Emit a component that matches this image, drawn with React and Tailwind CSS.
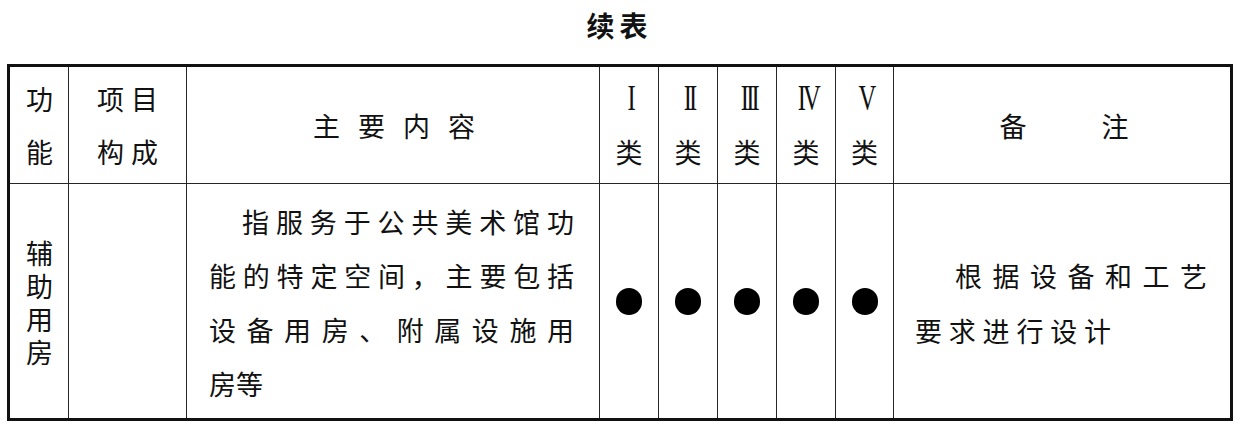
import React from 'react';

const CJK = { fontFamily: '"Noto Sans CJK SC", "Noto Sans", sans-serif' };

// spreads the characters of one line across its box, first glyph at the left edge and last at the right
const Spread = ({ text, className }) => (
  <div className={`flex justify-between ${className}`}>
    {[...text].map((c, i) => <span key={i}>{c}</span>)}
  </div>
);

const Roman = ({ children }) => (
  <div className="h-[53px] flex items-center justify-center">
    <span className="inline-block scale-x-[0.7] tracking-[-4px] text-[35px] leading-none font-['Liberation_Serif',serif] pl-[4px]">
      {children}
    </span>
  </div>
);

const CLASSES = ['I', 'II', 'III', 'IV', 'V'];

const cell = 'border-[#262626]';

export default function App() {
  return (
    <div className="w-[1245px] h-[432px] bg-white text-[#111] overflow-hidden text-[27px]" style={CJK}>

      {/* ── TITLE ── */}
      <div className="h-[64px] flex items-center justify-center pb-[15px] pr-[6px]">
        <span className="font-bold text-[28px] leading-none tracking-[5px]">续表</span>
      </div>

      {/* ── TABLE ── */}
      <div className="ml-[7px] w-[1226px] h-[357px] border-[3px] border-[#111]">
        <div className="grid grid-cols-[59px_118px_413px_59px_59px_59px_59px_58px_336px] grid-rows-[117px_234px] h-full">

          {/* header row */}
          <div className={`border-r border-b ${cell} flex items-center justify-center pl-[1px]`}>
            <div className="w-[27px] leading-[53px] break-all">功能</div>
          </div>
          <div className={`border-r border-b ${cell} flex flex-col items-center justify-center leading-[53px]`}>
            <Spread text="项目" className="w-[61px]" />
            <Spread text="构成" className="w-[61px]" />
          </div>
          <div className={`border-r border-b ${cell} flex items-center justify-center leading-none pl-[2px]`}>
            <Spread text="主要内容" className="w-[162px]" />
          </div>
          {CLASSES.map((c) => (
            <div key={c} className={`border-r border-b ${cell} flex flex-col justify-center`}>
              <Roman>{c}</Roman>
              <div className="h-[53px] flex items-center justify-center leading-none">类</div>
            </div>
          ))}
          <div className={`border-b ${cell} flex items-center justify-center leading-none pl-[4px]`}>
            <Spread text="备注" className="w-[129px]" />
          </div>

          {/* body row */}
          <div className={`border-r ${cell} flex items-center justify-center pt-[1px] pl-[1px]`}>
            <div className="w-[27px] leading-[33px] break-all">辅助用房</div>
          </div>
          <div className={`border-r ${cell}`} />
          <div className={`border-r ${cell} flex flex-col justify-center leading-[54px] pl-[22px] pr-[25px] pt-[3px]`}>
            <Spread text="指服务于公共美术馆功" className="pl-[33px]" />
            <Spread text="能的特定空间，主要包括" />
            <Spread text="设备用房、附属设施用" />
            <div>房等</div>
          </div>
          {CLASSES.map((c) => (
            <div key={c} className={`border-r ${cell} flex items-center justify-center`}>
              <div className="w-[26px] h-[27px] rounded-full bg-black" />
            </div>
          ))}
          <div className="flex flex-col justify-center leading-[55px] pl-[21px] pt-[3px]">
            <Spread text="根据设备和工艺" className="ml-[40px] w-[252px]" />
            <Spread text="要求进行设计" className="w-[196px]" />
          </div>

        </div>
      </div>
    </div>
  );
}
